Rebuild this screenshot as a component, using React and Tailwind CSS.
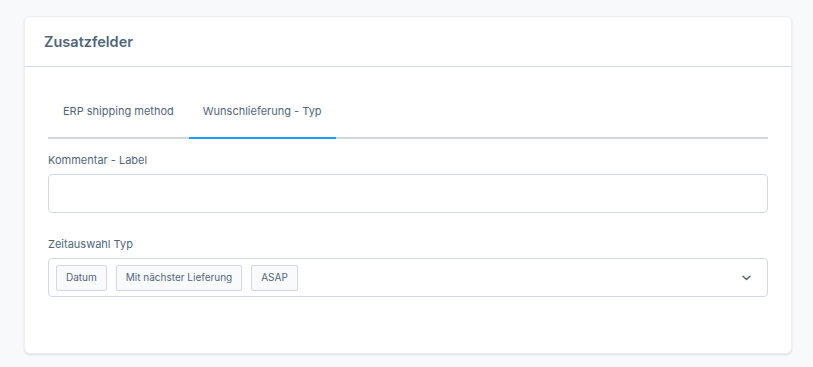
export default function App() {
  const font = { fontFamily: "Inter, 'Noto Sans', sans-serif" };
  return (
    <div className="min-h-[367px] w-full bg-[#f8f9fb] pt-4 pb-[13px] pl-6 pr-[21px]" style={font}>
      <div className="rounded-[6px] bg-white border border-[#eceff3] shadow-[0_1px_2px_rgba(0,0,0,0.12)]">
        <div className="h-[50px] flex items-center px-[19px] border-b border-[#d1d9e0]">
          <h2 className="text-[14.5px] font-semibold text-[#52667a]">Zusatzfelder</h2>
        </div>
        <div className="px-[23px] pt-6 pb-[56px]">
          <div className="flex border-b-2 border-[#d1d9e0]">
            <div className="px-[15px] pt-[12px] pb-[18px] text-[11px] leading-4 text-[#52667a] -mb-[2px]">
              ERP shipping method
            </div>
            <div className="px-[14px] pt-[12px] pb-[18px] text-[11px] leading-4 text-[#52667a] border-b-2 border-[#189eff] -mb-[2px]">
              Wunschlieferung - Typ
            </div>
          </div>
          <label className="block mt-[13px] mb-[6px] text-[11px] leading-4 text-[#52667a]">Kommentar - Label</label>
          <div className="h-[39px] rounded-[4px] border border-[#d1d9e0] bg-white"></div>
          <label className="block mt-[23px] mb-[6px] text-[11px] leading-4 text-[#52667a]">Zeitauswahl Typ</label>
          <div className="h-[39px] rounded-[4px] border border-[#d1d9e0] bg-white flex items-center pl-[7px] pr-[16px]">
            <div className="flex gap-[9px] flex-1">
              {["Datum", "Mit nächster Lieferung", "ASAP"].map((t) => (
                <span key={t} className="h-[26px] px-[9px] flex items-center rounded-[2px] border border-[#d1d9e0] bg-[#f9fafb] text-[10px] text-[#52667a]">
                  {t}
                </span>
              ))}
            </div>
            <svg width="9" height="6" viewBox="0 0 9 6" className="text-[#52667a]">
              <path d="M1 1.2 L4.5 4.5 L8 1.2" fill="none" stroke="currentColor" strokeWidth="1.5" strokeLinecap="round" strokeLinejoin="round" />
            </svg>
          </div>
        </div>
      </div>
    </div>
  );
}
